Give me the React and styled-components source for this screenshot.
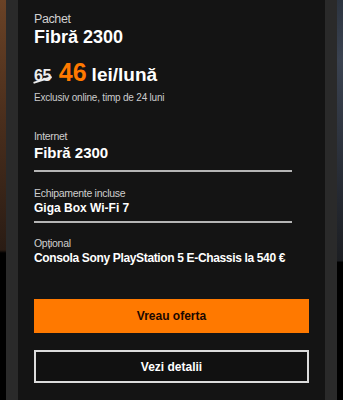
import React from "react";
import styled, { createGlobalStyle } from "styled-components";

const Global = createGlobalStyle`
  html, body { margin: 0; padding: 0; background: #000; }
  body { font-family: "Liberation Sans", Arial, sans-serif; -webkit-font-smoothing: antialiased; }
  * { box-sizing: border-box; }
`;

const Page = styled.div`
  display: grid;
  grid-template-columns: 6px 12px 1fr 12px 6px;
  height: 400px;
  overflow: hidden;
  background: #000;
`;

const Backdrop = styled.div`
  background: ${(p) => p.$bg};
`;

const Band = styled.div`
  background: #2a2a2a;
`;

const Card = styled.div`
  background: #141414;
  padding: 12px 16px 0 16px;
  display: flex;
  flex-direction: column;
  color: #fff;
`;

const Label = styled.div`
  font-size: 12.5px;
  line-height: 15px;
  color: #d0d0d0;
  letter-spacing: -0.4px;
`;

const Title = styled.div`
  font-size: 18px;
  font-weight: 700;
  line-height: 22px;
  margin-top: -1px;
`;

const PriceRow = styled.div`
  display: flex;
  align-items: baseline;
  margin-top: 11px;
  line-height: 26px;
  font-weight: 700;
`;

const OldPrice = styled.span`
  position: relative;
  font-size: 16px;
  color: #ececec;
  letter-spacing: -0.5px;
  margin-right: 8px;
  &::after {
    content: "";
    position: absolute;
    left: -1px;
    right: -1px;
    top: 60%;
    height: 1.5px;
    background: #ececec;
    transform: rotate(-18deg);
  }
`;

const NewPrice = styled.span`
  font-size: 25px;
  color: #ff7900;
  margin-right: 5px;
`;

const Unit = styled.span`
  font-size: 19px;
  color: #fff;
`;

const Note = styled.div`
  font-size: 10px;
  line-height: 12px;
  color: #cccccc;
  margin-top: 3px;
  letter-spacing: -0.2px;
`;

const Fields = styled.div`
  display: flex;
  flex-direction: column;
  margin-top: 25px;
`;

const Field = styled.div`
  width: 258px;
  padding-bottom: ${(p) => p.$pad || 0}px;
  border-bottom: ${(p) => (p.$pad ? "2px solid #b5b5b5" : "none")};
  margin-bottom: ${(p) => p.$after || 0}px;
`;

const FieldLabel = styled.div`
  font-size: 10.5px;
  line-height: 14px;
  color: #cfcfcf;
  letter-spacing: -0.3px;
`;

const FieldValue = styled.div`
  font-size: ${(p) => p.$size}px;
  font-weight: 700;
  line-height: ${(p) => p.$size + 5}px;
  margin-top: ${(p) => p.$gap || 0}px;
  white-space: nowrap;
  letter-spacing: ${(p) => (p.$tight ? "-0.35px" : "0")};
`;

const Actions = styled.div`
  display: flex;
  flex-direction: column;
  gap: 17px;
  margin-top: 32px;
`;

const Button = styled.button`
  height: ${(p) => (p.$primary ? 34 : 33)}px;
  width: 100%;
  border: ${(p) => (p.$primary ? "none" : "2px solid #dcdcdc")};
  background: ${(p) => (p.$primary ? "#ff7900" : "#111")};
  color: ${(p) => (p.$primary ? "#1a0800" : "#fff")};
  font-family: inherit;
  font-size: 12px;
  font-weight: 700;
  padding: 0;
`;

export default function App() {
  return (
    <>
      <Global />
      <Page>
        <Backdrop $bg="linear-gradient(to bottom, #6a4226 0px, #4a2e1c 120px, #2a1c14 250px, #000 253px)" />
        <Band />
        <Card>
          <Label>Pachet</Label>
          <Title>Fibră 2300</Title>
          <PriceRow>
            <OldPrice>65</OldPrice>
            <NewPrice>46</NewPrice>
            <Unit>lei/lună</Unit>
          </PriceRow>
          <Note>Exclusiv online, timp de 24 luni</Note>
          <Fields>
            <Field $pad={7} $after={14}>
              <FieldLabel>Internet</FieldLabel>
              <FieldValue $size={15}>Fibră 2300</FieldValue>
            </Field>
            <Field $pad={4} $after={13}>
              <FieldLabel>Echipamente incluse</FieldLabel>
              <FieldValue $size={12}>Giga Box Wi-Fi 7</FieldValue>
            </Field>
            <Field>
              <FieldLabel>Opțional</FieldLabel>
              <FieldValue $size={12} $tight>Consola Sony PlayStation 5 E-Chassis la 540 €</FieldValue>
            </Field>
          </Fields>
          <Actions>
            <Button $primary>Vreau oferta</Button>
            <Button>Vezi detalii</Button>
          </Actions>
        </Card>
        <Band />
        <Backdrop $bg="linear-gradient(to bottom, #2c3440 0px, #3a4250 60px, #242830 200px, #1c1e22 261px, #000 262px)" />
      </Page>
    </>
  );
}
